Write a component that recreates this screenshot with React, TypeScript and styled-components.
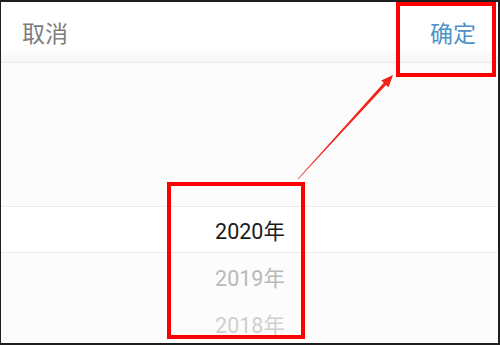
import React from "react";
import styled, { createGlobalStyle } from "styled-components";

const Global = createGlobalStyle`
  html, body { margin: 0; padding: 0; background: #ffffff; }
  body { font-family: "Roboto", "Noto Sans CJK SC", sans-serif; }
`;

const Frame = styled.div`
  position: relative;
  box-sizing: border-box;
  width: 500px;
  height: 345px;
  overflow: hidden;
  border-style: solid;
  border-color: #1e1e1e;
  border-width: 2px 2px 2px 1px;
  background: #fcfcfc;
  display: flex;
  flex-direction: column;
`;

const Header = styled.div`
  height: 60px;
  flex: none;
  display: flex;
  align-items: center;
  justify-content: space-between;
  padding: 0 22px 0 21px;
  background: linear-gradient(#ffffff 0%, #ffffff 78%, #f5f5f5 100%);
  border-bottom: 1px solid #ebebeb;
`;

const HeaderButton = styled.span<{ $tone: "muted" | "accent" }>`
  font-family: "Noto Sans CJK SC", sans-serif;
  font-size: 23px;
  line-height: 1;
  letter-spacing: 0;
  color: ${(p) => (p.$tone === "accent" ? "#4e92c9" : "#7d7d7d")};
`;

const Wheel = styled.div`
  flex: 1;
  display: flex;
  flex-direction: column;
  padding-top: 143px;
`;

const Row = styled.div<{ $selected?: boolean; $shade: string }>`
  flex: none;
  box-sizing: border-box;
  height: ${(p) => (p.$selected ? "47px" : "47px")};
  display: flex;
  align-items: center;
  justify-content: center;
  padding-left: 1px;
  font-size: 21.5px;
  color: ${(p) => p.$shade};
  background: ${(p) => (p.$selected ? "#ffffff" : "transparent")};
  border-top: ${(p) => (p.$selected ? "1px solid #ebebeb" : "none")};
  border-bottom: ${(p) => (p.$selected ? "1px solid #ebebeb" : "none")};
`;

const Highlight = styled.div<{ $l: number; $t: number; $w: number; $h: number }>`
  position: absolute;
  box-sizing: border-box;
  left: ${(p) => p.$l}px;
  top: ${(p) => p.$t}px;
  width: ${(p) => p.$w}px;
  height: ${(p) => p.$h}px;
  border: 4px solid #ff0000;
  pointer-events: none;
`;

const Overlay = styled.svg`
  position: absolute;
  left: -1px;
  top: -2px;
  width: 500px;
  height: 345px;
  pointer-events: none;
`;

function Arrow() {
  const tail = { x: 298, y: 179 };
  const tip = { x: 393, y: 75 };
  const dx = tip.x - tail.x;
  const dy = tip.y - tail.y;
  const len = Math.hypot(dx, dy);
  const ux = dx / len;
  const uy = dy / len;
  const nx = -uy;
  const ny = ux;
  const headLen = 12;
  const headHalf = 5;
  const bx = tip.x - ux * headLen;
  const by = tip.y - uy * headLen;
  const sw = 1.5;
  const tw = 0.3;
  const pts = [
    [tail.x + nx * tw, tail.y + ny * tw],
    [bx + nx * sw, by + ny * sw],
    [bx + nx * headHalf, by + ny * headHalf],
    [tip.x, tip.y],
    [bx - nx * headHalf, by - ny * headHalf],
    [bx - nx * sw, by - ny * sw],
    [tail.x - nx * tw, tail.y - ny * tw],
  ]
    .map((p) => `${p[0].toFixed(1)},${p[1].toFixed(1)}`)
    .join(" ");
  return (
    <Overlay viewBox="0 0 500 345">
      <polygon points={pts} fill="#f2231b" />
    </Overlay>
  );
}

export default function App() {
  return (
    <>
      <Global />
      <Frame>
        <Header>
          <HeaderButton $tone="muted">取消</HeaderButton>
          <HeaderButton $tone="accent">确定</HeaderButton>
        </Header>
        <Wheel>
          <Row $selected $shade="#1a1a1a">2020年</Row>
          <Row $shade="#b9b9b9">2019年</Row>
          <Row $shade="#cfcfcf">2018年</Row>
        </Wheel>
        <Arrow />
        <Highlight $l={395} $t={0} $w={100} $h={75} />
        <Highlight $l={166} $t={180} $w={138} $h={157} />
      </Frame>
    </>
  );
}
